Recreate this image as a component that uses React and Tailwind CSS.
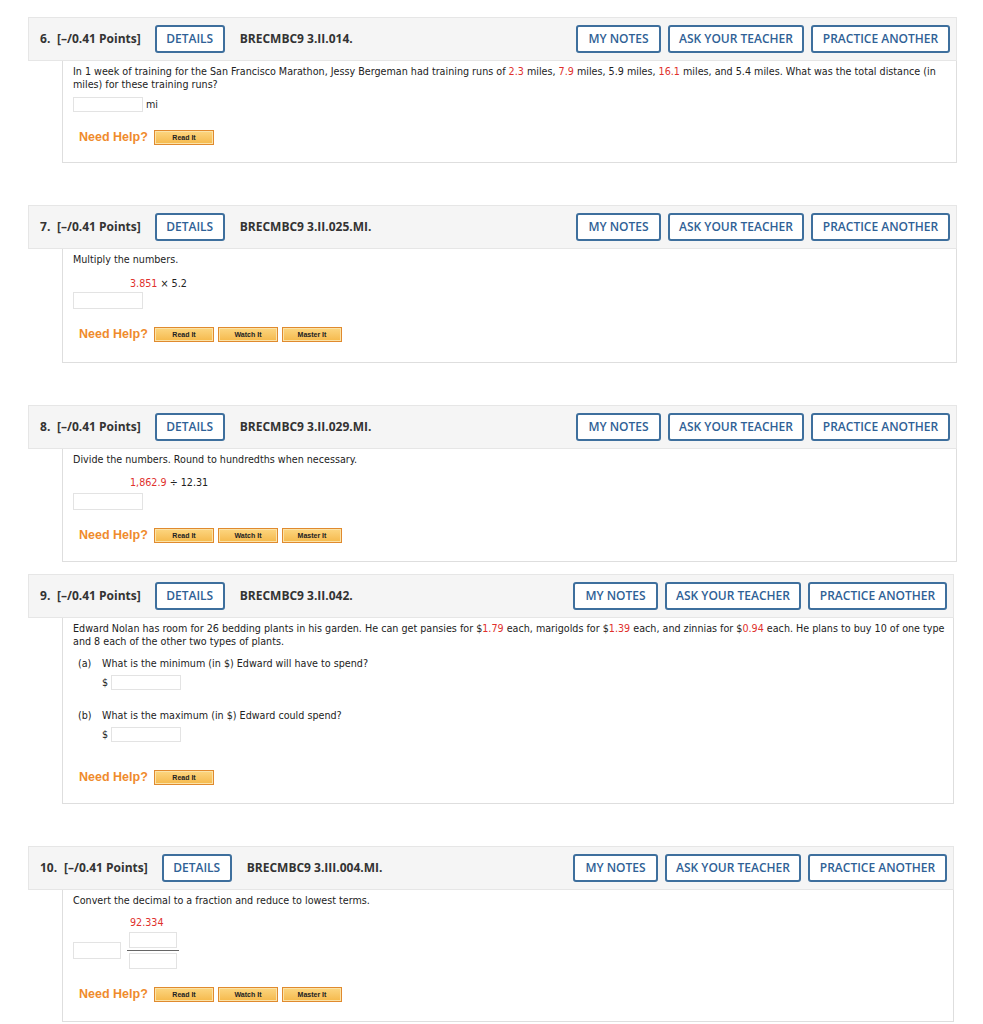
import React from 'react';

const head = { fontFamily: '"Open Sans", "Liberation Sans", sans-serif' };
const body = { fontFamily: '"DejaVu Sans", Verdana, sans-serif' };

function Btn({ children, w }) {
  return (
    <button className={`h-[28px] rounded-[3px] border-2 border-[#3e6f9d] bg-white text-[12px] font-semibold text-[#2f6196] ${w}`}>
      {children}
    </button>
  );
}

function Header({ num, code, numW }) {
  return (
    <div className="flex h-[44px] items-center border border-[#e6e6e6] bg-[#f5f5f5] pl-[11px] pr-[6px]" style={head}>
      <span className={`text-[12px] font-bold text-[#333] ${numW}`}>{num}.</span>
      <span className="text-[12px] font-bold text-[#333]">[–/0.41 Points]</span>
      <div className="ml-[14px]"><Btn w="w-[70px]">DETAILS</Btn></div>
      <span className="ml-[15px] text-[12px] font-bold text-[#333]">{code}</span>
      <div className="ml-auto flex gap-[7px]">
        <Btn w="w-[85px]">MY NOTES</Btn>
        <Btn w="w-[136px]">ASK YOUR TEACHER</Btn>
        <Btn w="w-[139px]">PRACTICE ANOTHER</Btn>
      </div>
    </div>
  );
}

function Help({ items }) {
  return (
    <div className="flex items-center">
      <span className="w-[81px] shrink-0 whitespace-nowrap pl-[6px] text-[12.5px] font-bold text-[#ef8b2c]" style={{ fontFamily: '"Liberation Sans", Arial, sans-serif' }}>Need Help?</span>
      <div className="flex gap-[4px]">
        {items.map(t => (
          <span key={t} className="flex h-[15px] w-[60px] items-center justify-center border border-[#e08a2e] bg-gradient-to-b from-[#fcd680] to-[#f5b94a] text-[7px] font-bold text-[#222] shadow-[inset_0_0_0_1px_#fbe3a8]" style={{ fontFamily: '"Liberation Sans", Arial, sans-serif' }}>{t}</span>
        ))}
      </div>
    </div>
  );
}

const R = ({ children }) => <span className="text-[#e0302c]">{children}</span>;
const Input = ({ w = 'w-[70px] h-[15px]' }) => <span className={`inline-block border border-[#e3e3e3] bg-white ${w}`} />;

function Question({ num, code, numW, right = 'w-[929px]', children, mt }) {
  return (
    <div className={`${right} ${mt}`}>
      <Header num={num} code={code} numW={numW} />
      <div className="ml-[34px] border border-t-0 border-[#dedede] bg-white pl-[10px] pr-[4px] text-[9.6px] leading-[13px] text-[#222]" style={body}>
        {children}
      </div>
    </div>
  );
}

export default function App() {
  return (
    <div className="min-h-screen bg-white pl-[28px] pt-[17px]">
      <Question num="6" code="BRECMBC9 3.II.014." numW="w-[17px]">
        <div className="pt-[4px] pr-[6px]">
          In 1 week of training for the San Francisco Marathon, Jessy Bergeman had training runs of <R>2.3</R> miles, <R>7.9</R> miles, 5.9 miles, <R>16.1</R> miles, and 5.4 miles. What was the total distance (in miles) for these training runs?
        </div>
        <div className="mt-[6px] flex items-center gap-[3px]"><Input /> <span>mi</span></div>
        <div className="mt-[18px] pb-[17px]"><Help items={['Read It']} /></div>
      </Question>

      <Question num="7" code="BRECMBC9 3.II.025.MI." numW="w-[17px]" mt="mt-[42px]">
        <div className="pt-[4px]">Multiply the numbers.</div>
        <div className="mt-[11px] pl-[57px]"><R>3.851</R> × 5.2</div>
        <div className="mt-[2px] leading-[0]"><Input w="w-[70px] h-[17px]" /></div>
        <div className="mt-[18px] pb-[20px]"><Help items={['Read It', 'Watch It', 'Master It']} /></div>
      </Question>

      <Question num="8" code="BRECMBC9 3.II.029.MI." numW="w-[17px]" mt="mt-[42px]">
        <div className="pt-[4px]">Divide the numbers. Round to hundredths when necessary.</div>
        <div className="mt-[10px] pl-[57px]"><R>1,862.9</R> ÷ 12.31</div>
        <div className="mt-[4px] leading-[0]"><Input w="w-[70px] h-[17px]" /></div>
        <div className="mt-[18px] pb-[18px]"><Help items={['Read It', 'Watch It', 'Master It']} /></div>
      </Question>

      <Question num="9" code="BRECMBC9 3.II.042." numW="w-[17px]" right="w-[926px]" mt="mt-[12px]">
        <div className="pt-[4px]">
          Edward Nolan has room for 26 bedding plants in his garden. He can get pansies for $<R>1.79</R> each, marigolds for $<R>1.39</R> each, and zinnias for $<R>0.94</R> each. He plans to buy 10 of one type and 8 each of the other two types of plants.
        </div>
        <div className="mt-[9px] flex pl-[5px]"><span className="w-[24px]">(a)</span><span>What is the minimum (in $) Edward will have to spend?</span></div>
        <div className="mt-[5px] flex items-center pl-[29px]"><span className="w-[9px]">$</span><Input /></div>
        <div className="mt-[19px] flex pl-[5px]"><span className="w-[24px]">(b)</span><span>What is the maximum (in $) Edward could spend?</span></div>
        <div className="mt-[5px] flex items-center pl-[29px]"><span className="w-[9px]">$</span><Input /></div>
        <div className="mt-[28px] pb-[18px]"><Help items={['Read It']} /></div>
      </Question>

      <Question num="10" code="BRECMBC9 3.III.004.MI." numW="w-[24px]" right="w-[926px]" mt="mt-[42px]">
        <div className="pt-[4px]">Convert the decimal to a fraction and reduce to lowest terms.</div>
        <div className="mt-[9px] pl-[57px]"><R>92.334</R></div>
        <div className="mt-[3px] flex items-center">
          <Input w="w-[48px] h-[17px]" />
          <div className="ml-[6px] flex flex-col items-center">
            <Input w="w-[48px] h-[16px]" />
            <span className="my-[2px] h-[1px] w-[52px] bg-[#666]" />
            <Input w="w-[48px] h-[16px]" />
          </div>
        </div>
        <div className="mt-[18px] pb-[19px]"><Help items={['Read It', 'Watch It', 'Master It']} /></div>
      </Question>
    </div>
  );
}
